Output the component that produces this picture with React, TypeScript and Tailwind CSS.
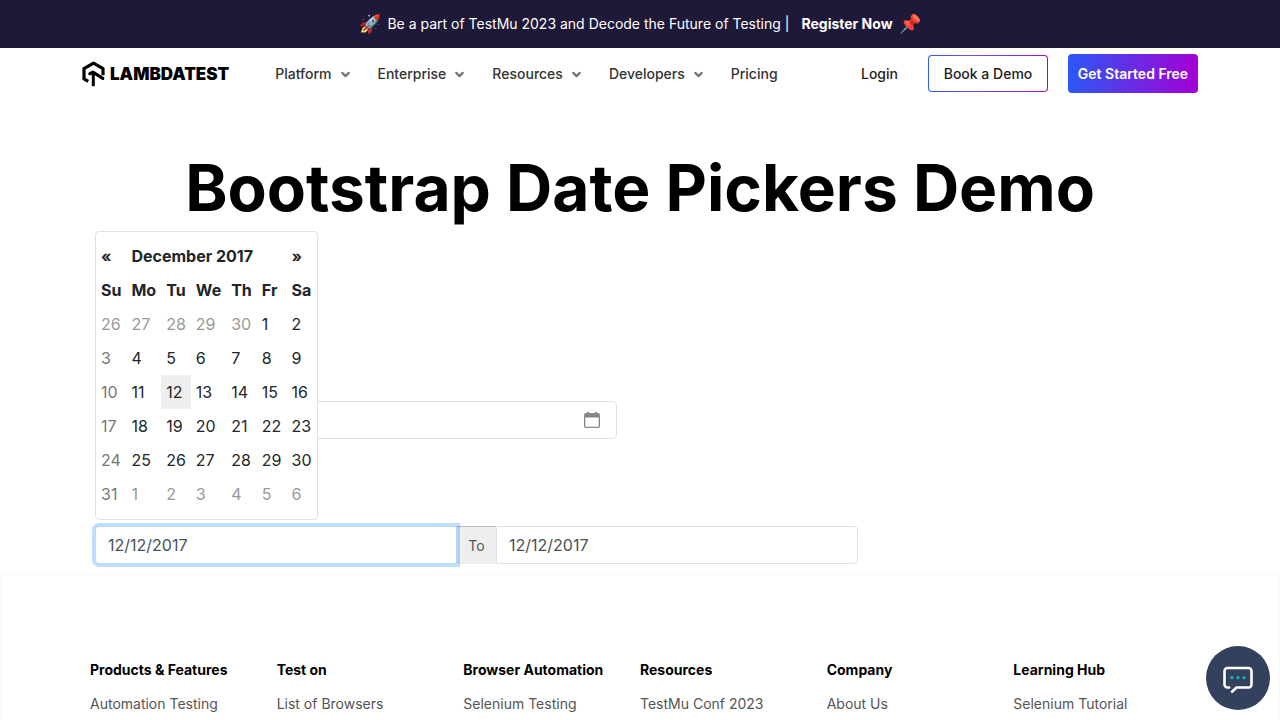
import { useState } from "react";
import { ChevronDown } from "lucide-react";

const menu = ["Platform", "Enterprise", "Resources", "Developers"];

const weekdays = ["Su", "Mo", "Tu", "We", "Th", "Fr", "Sa"];

const weeks = [
  [26, 27, 28, 29, 30, 1, 2],
  [3, 4, 5, 6, 7, 8, 9],
  [10, 11, 12, 13, 14, 15, 16],
  [17, 18, 19, 20, 21, 22, 23],
  [24, 25, 26, 27, 28, 29, 30],
  [31, 1, 2, 3, 4, 5, 6],
];

const footerLeft = [
  { title: "Products & Features", link: "Automation Testing" },
  { title: "Test on", link: "List of Browsers" },
  { title: "Browser Automation", link: "Selenium Testing" },
];

const footerRight = [
  { title: "Resources", link: "TestMu Conf 2023" },
  { title: "Company", link: "About Us" },
  { title: "Learning Hub", link: "Selenium Tutorial" },
];

function Banner() {
  return (
    <div className="flex h-12 items-center justify-center gap-1.5 bg-[#1e1839] text-sm text-white">
      <span className="text-lg">🚀</span>
      <span>Be a part of TestMu 2023 and Decode the Future of Testing |</span>
      <a href="#register" className="ml-1.5 font-bold">
        Register Now
      </a>
      <span className="text-lg">📌</span>
    </div>
  );
}

function Logo() {
  return (
    <a href="#home" aria-label="LambdaTest home" className="flex items-center gap-1 text-black">
      <svg width="24" height="26" viewBox="0 0 24 26" fill="none" stroke="currentColor">
        <path d="M6.2 20.4 2 17.9V7.6L11.5 2.1 21 7.6V14.2" strokeWidth="3.2" strokeLinejoin="round" />
        <path d="M7.800 12.700 10.900 11.200 20.800 17.400" strokeWidth="3.200" strokeLinejoin="round" strokeLinecap="round" />
        <path d="M11.3 12v13.200" strokeWidth="3" />
      </svg>
      <span className="text-[17px] leading-6 font-black">LAMBDATEST</span>
    </a>
  );
}

function Header() {
  return (
    <header className="mx-auto flex h-[51px] max-w-[1116px] items-center text-sm font-medium text-[#333]">
      <Logo />
      <nav className="ml-[46px] flex items-center gap-[26px]">
        {menu.map((item) => (
          <button key={item} type="button" className="flex items-center gap-[7px]">
            {item}
            <ChevronDown size={13} strokeWidth={4} className="mt-0.5 text-[#777]" />
          </button>
        ))}
        <a href="#pricing">Pricing</a>
      </nav>
      <div className="ml-auto flex items-center text-[#1c1e21]">
        <a href="#login">Login</a>
        <a
          href="#demo"
          className="ml-[30px] rounded bg-linear-to-r from-[#2f5bf5] to-[#a400d6] p-px"
        >
          <span className="flex h-[35px] w-[118px] items-center justify-center rounded-[3px] bg-white">
            Book a Demo
          </span>
        </a>
        <a
          href="#start"
          className="ml-5 flex h-[39px] w-[130px] items-center justify-center rounded bg-linear-to-r/srgb from-[#2b58f6] to-[#a500d4] font-semibold text-white"
        >
          Get Started Free
        </a>
      </div>
    </header>
  );
}

function Calendar() {
  return (
    <div className="absolute bottom-full left-0 z-20 mb-1.5 rounded border border-[#dee2e6] bg-white pt-[7px] pb-2 text-base text-[#212529]">
      <table className="border-collapse text-left">
        <thead>
          <tr>
            <th className="px-[5px] py-[5px]">
              <button type="button" aria-label="Previous month" className="font-bold">
                «
              </button>
            </th>
            <th colSpan={5} className="px-[5px] py-[5px]">
              December 2017
            </th>
            <th className="px-[5px] py-[5px]">
              <button type="button" aria-label="Next month" className="font-bold">
                »
              </button>
            </th>
          </tr>
          <tr>
            {weekdays.map((d) => (
              <th key={d} className="px-[5px] py-[5px]">
                {d}
              </th>
            ))}
          </tr>
        </thead>
        <tbody>
          {weeks.map((week, w) => (
            <tr key={w}>
              {week.map((day, i) => {
                const outside = (w === 0 && day > 20) || (w === 5 && i > 0);
                const active = w === 2 && day === 12;
                const color = outside ? "text-[#999]" : i === 0 ? "text-[#777]" : "";
                return (
                  <td key={i} className={`px-[5px] py-[5px] ${color} ${active ? "bg-[#eee]" : ""}`}>
                    {day}
                  </td>
                );
              })}
            </tr>
          ))}
        </tbody>
      </table>
    </div>
  );
}

function CalendarIcon() {
  return (
    <svg width="16" height="16" viewBox="0 0 16 16" className="text-[#85878b]">
      <path
        fill="currentColor"
        d="M3 0h2v1h6V0h2v1h1a2 2 0 0 1 2 2v11a2 2 0 0 1-2 2H2a2 2 0 0 1-2-2V3a2 2 0 0 1 2-2h1zM1.300 5.400V13.700a1 1 0 0 0 1 1h11.400a1 1 0 0 0 1-1V5.400z"
        fillRule="evenodd"
      />
    </svg>
  );
}

function Pickers() {
  const [single, setSingle] = useState("");
  const [start, setStart] = useState("12/12/2017");
  const [end, setEnd] = useState("12/12/2017");
  return (
    <section className="mx-auto max-w-[1090px] pt-[173px] pb-[10px] text-[#495057]">
      <div className="flex h-[38px] max-w-[522px] items-center rounded border border-[#dee2e6] pr-4">
        <input
          aria-label="Select date"
          value={single}
          onChange={(e) => setSingle(e.target.value)}
          className="h-full min-w-0 flex-1 px-3 outline-none"
        />
        <button type="button" aria-label="Open calendar">
          <CalendarIcon />
        </button>
      </div>
      <div className="relative mt-[87px] flex h-[38px] max-w-[763px]">
        <input
          aria-label="Start date"
          value={start}
          onChange={(e) => setStart(e.target.value)}
          className="relative z-10 min-w-0 flex-1 rounded-l border border-[#b9dafe] bg-white px-3 shadow-[0_0_0_3px_rgba(0,123,255,0.25)] outline-none"
        />
        <span className="flex w-[39px] items-center justify-center border-t border-[#bbb] bg-[#eee] text-sm text-[#555]">
          To
        </span>
        <input
          aria-label="End date"
          value={end}
          onChange={(e) => setEnd(e.target.value)}
          className="min-w-0 flex-1 rounded-r border border-[#dee2e6] bg-white px-3 outline-none"
        />
        <Calendar />
      </div>
    </section>
  );
}

function FooterColumn({ title, link }: { title: string; link: string }) {
  return (
    <div>
      <h2 className="text-sm leading-5 font-bold text-black">{title}</h2>
      <a href="#footer" className="mt-3.5 block text-sm leading-5 text-[#555]">
        {link}
      </a>
    </div>
  );
}

function Footer() {
  return (
    <footer className="border border-[#f8f8f8] pt-[85px] pb-10">
      <div className="mx-auto grid max-w-[1120px] grid-cols-2">
        <div className="grid grid-cols-3 [&>div]:pl-2.5">
          {footerLeft.map((c) => (
            <FooterColumn key={c.title} {...c} />
          ))}
        </div>
        <div className="grid grid-cols-3">
          {footerRight.map((c) => (
            <FooterColumn key={c.title} {...c} />
          ))}
        </div>
      </div>
    </footer>
  );
}

function ChatButton() {
  return (
    <button
      type="button"
      aria-label="Open chat"
      className="fixed right-2.5 bottom-2.5 z-30 flex size-16 items-center justify-center rounded-full bg-[#33415c]"
    >
      <svg width="32" height="32" viewBox="0 0 32 32" fill="none">
        <path
          d="M7.2 25.5H5.5a3 3 0 0 1-3-3V9a3 3 0 0 1 3-3h21a3 3 0 0 1 3 3v13.500a3 3 0 0 1-3 3H14.500L10 29.700"
          stroke="#fff"
          strokeWidth="2.600"
          strokeLinecap="round"
          strokeLinejoin="round"
        />
        <circle cx="10" cy="15.700" r="1.600" fill="#10b5c4" />
        <circle cx="16" cy="15.700" r="1.600" fill="#10b5c4" />
        <circle cx="22" cy="15.700" r="1.600" fill="#10b5c4" />
      </svg>
    </button>
  );
}

export default function App() {
  return (
    <div className="min-h-screen bg-white font-['Inter',sans-serif]">
      <div className="h-screen overflow-x-hidden overflow-y-auto [scrollbar-width:none]">
        <Banner />
        <Header />
        <main>
          <h1 className="pt-[49px] text-center text-[64px] leading-20 font-bold text-black">
            Bootstrap Date Pickers Demo
          </h1>
          <Pickers />
        </main>
        <Footer />
      </div>
      <ChatButton />
    </div>
  );
}
